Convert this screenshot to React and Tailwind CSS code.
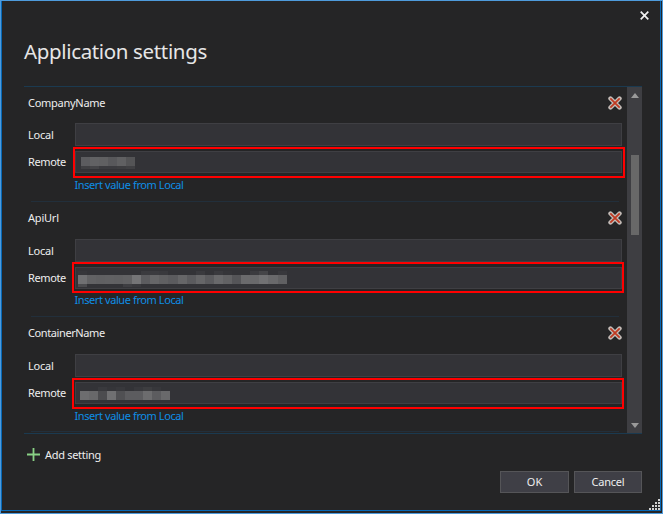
import React from "react";

const rows = [
  {
    name: "CompanyName",
    track: "tracking-[-0.27px]",
    head: "h-[36px]",
    link: "h-[27px] pt-[2px]",
    frame: "left-[-2px] top-[-4px] w-[552px]",
    mask: "left-[6px] top-[6px]",
    above: [],
    main: ["#5c5c5f", "#626264", "#606062", "#58585b", "#606062", "#545456"],
    below: ["#404043", "#454548", "#3b3b3f", "#3b3b3f", "#3d3d40", "#404043"],
  },
  {
    name: "ApiUrl",
    track: "tracking-[-0.2px]",
    head: "h-[37px]",
    link: "h-[26px] pt-[1px]",
    frame: "left-[-3px] top-[-5px] w-[552px]",
    mask: "left-[3px] top-[4px]",
    above: ["#36363a", "#333337", "#333337", "#333337", "#333337", "#333337", "#333337", "#3b3b3f", "#3b3b3f", "#39393d", "#333337", "#333337", "#333337", "#3a3a3e", "#333337", "#3a3a3e", "#353539", "#333337", "#333337", "#3b3b3f", "#454548", "#333337", "#38383c"],
    main: ["#707072", "#626264", "#606062", "#616163", "#606062", "#626264", "#757577", "#5c5c5f", "#666668", "#606062", "#5b5b5e", "#666668", "#5b5b5e", "#666668", "#5b5b5e", "#69696b", "#626264", "#555558", "#6a6a6c", "#69696b", "#717173", "#69696b", "#606062"],
    below: ["#4b4b4e", "#333337", "#333337", "#333337", "#333337", "#3e3e42", "#39393d"],
  },
  {
    name: "ContainerName",
    track: "tracking-[-0.4px]",
    head: "h-[37px]",
    link: "h-[26px] pt-[2px]",
    frame: "left-[-3px] top-[-4px] w-[552px]",
    mask: "left-[5px] top-[5px]",
    above: ["#333337", "#333337", "#39393d", "#353539", "#38383c", "#333337", "#38383c", "#3d3d40", "#37373b", "#333337"],
    main: ["#6d6d6f", "#68686a", "#4c4c4f", "#707072", "#505053", "#5c5c5f", "#5c5c5f", "#6c6c6e", "#5c5c5f", "#69696b"],
    below: [],
  },
];

function Cells({ colors, className }) {
  if (!colors.length) return null;
  return (
    <div className={`flex ${className}`}>
      {colors.map((c, i) => (
        <span key={i} className="w-[9.1px] shrink-0" style={{ backgroundColor: c }} />
      ))}
    </div>
  );
}

function DeleteIcon() {
  return (
    <svg width="14" height="14" viewBox="0 0 14 14" className="shrink-0">
      <path d="M2.5 2.5 11.5 11.5M11.5 2.5 2.5 11.5" stroke="#c4beba" strokeWidth="4.4" strokeLinecap="round" />
      <path d="M2.3 2.3 11.7 11.7M11.7 2.3 2.3 11.7" stroke="#c03a22" strokeWidth="1.8" />
    </svg>
  );
}

function Setting({ row }) {
  return (
    <div className="flex h-[115px] shrink-0 flex-col">
      <div className={`flex items-start justify-between pl-1 pr-[5.5px] ${row.head}`}>
        <span className={`pt-[7px] leading-[18px] ${row.track}`}>{row.name}</span>
        <span className="pt-[9px]"><DeleteIcon /></span>
      </div>
      <div className="flex h-[23px] pl-1">
        <span className="w-[46.5px] pt-[3px] leading-[18px] tracking-[-0.2px]">Local</span>
        <div className="w-[547px] border border-[#3f3f43] bg-[#333337]" />
      </div>
      <div className="mt-[5px] flex h-[23px] pl-1">
        <span className="w-[46.5px] pt-[2px] leading-[18px] tracking-[-0.4px]">Remote</span>
        <div className="relative h-[23px] w-[547px]">
          <div className="h-[22px] border border-[#3f3f43] bg-[#333337]" />
          <div className={`absolute ${row.mask}`}>
            <Cells colors={row.above} className="h-[4px]" />
            <Cells colors={row.main} className="h-[9px]" />
            <Cells colors={row.below} className="h-[3px]" />
          </div>
          <div className={`absolute h-[31px] border-2 border-[#ff0000] ${row.frame}`} />
        </div>
      </div>
      <div className={`pl-[50.5px] leading-[18px] tracking-[-0.41px] text-[#0e8ee5] ${row.link}`}>Insert value from Local</div>
      <div className="ml-[7px] h-px w-[588px] bg-[#222f3b]" />
    </div>
  );
}

function Grip() {
  const dots = [[9, 0], [6, 3], [9, 3], [3, 6], [6, 6], [9, 6], [0, 9], [3, 9], [6, 9], [9, 9]];
  return (
    <svg width="11" height="11" viewBox="0 0 11 11" shapeRendering="crispEdges">
      {dots.map(([x, y]) => (
        <rect key={`${x}-${y}`} x={x} y={y} width="2" height="2" fill="#d2d2d2" />
      ))}
    </svg>
  );
}

export default function App() {
  return (
    <div className="h-[514px] w-[663px] overflow-hidden border border-[#4e9bdc] bg-[#252526] font-['Noto_Sans','Open_Sans',sans-serif] text-[11px] text-[#eeeeee]">
      <div className="flex h-[510px] w-[660px] flex-col border-b border-l border-r border-[#0768b5]">
        <div className="flex h-[28px] shrink-0 items-end justify-end pr-[11px]">
          <svg width="9" height="9" viewBox="0 0 9 9" className="mb-[9px]">
            <path d="M.7.7 8.3 8.3M8.3.7.7 8.3" stroke="#f1f1f1" strokeWidth="1.7" />
          </svg>
        </div>
        <h1 className="h-[57px] shrink-0 pl-[22px] pt-[7px] text-[20.5px] leading-[30px] tracking-[-0.35px] text-[#e6e6e6]">Application settings</h1>
        <div className="ml-[22px] flex h-[348px] w-[618px] shrink-0 border-y border-[#1b3a50]">
          <div className="flex h-[346px] w-[603px] flex-col overflow-hidden">
            {rows.map((row) => <Setting key={row.name} row={row} />)}
          </div>
          <div className="flex w-[15px] flex-col items-center bg-[#3e3e42]">
            <svg width="8" height="5" viewBox="0 0 8 5" className="mt-[6px]"><path d="M4 0 8 5H0Z" fill="#999" /></svg>
            <div className="mt-[57px] h-[80px] w-[8px] bg-[#686868]" />
            <svg width="8" height="5" viewBox="0 0 8 5" className="mb-[5px] mt-auto"><path d="M0 0H8L4 5Z" fill="#999" /></svg>
          </div>
        </div>
        <div className="ml-[25px] mt-[12px] flex h-[16px] shrink-0 items-center gap-[5px]">
          <svg width="13" height="13" viewBox="0 0 13 13"><path d="M6.5 0V13M0 6.5H13" stroke="#89d185" strokeWidth="1.8" /></svg>
          <span className="pt-[2px] tracking-[-0.3px]">Add setting</span>
        </div>
        <div className="mt-[9px] flex h-[22px] shrink-0 justify-end gap-[5px] pr-[18px]">
          <button className="w-[69px] border border-[#555558] bg-[#3f3f46] leading-[18px]">OK</button>
          <button className="w-[68px] border border-[#555558] bg-[#3f3f46] leading-[18px] tracking-[-0.2px]">Cancel</button>
        </div>
        <div className="mt-auto flex justify-end"><Grip /></div>
      </div>
    </div>
  );
}
